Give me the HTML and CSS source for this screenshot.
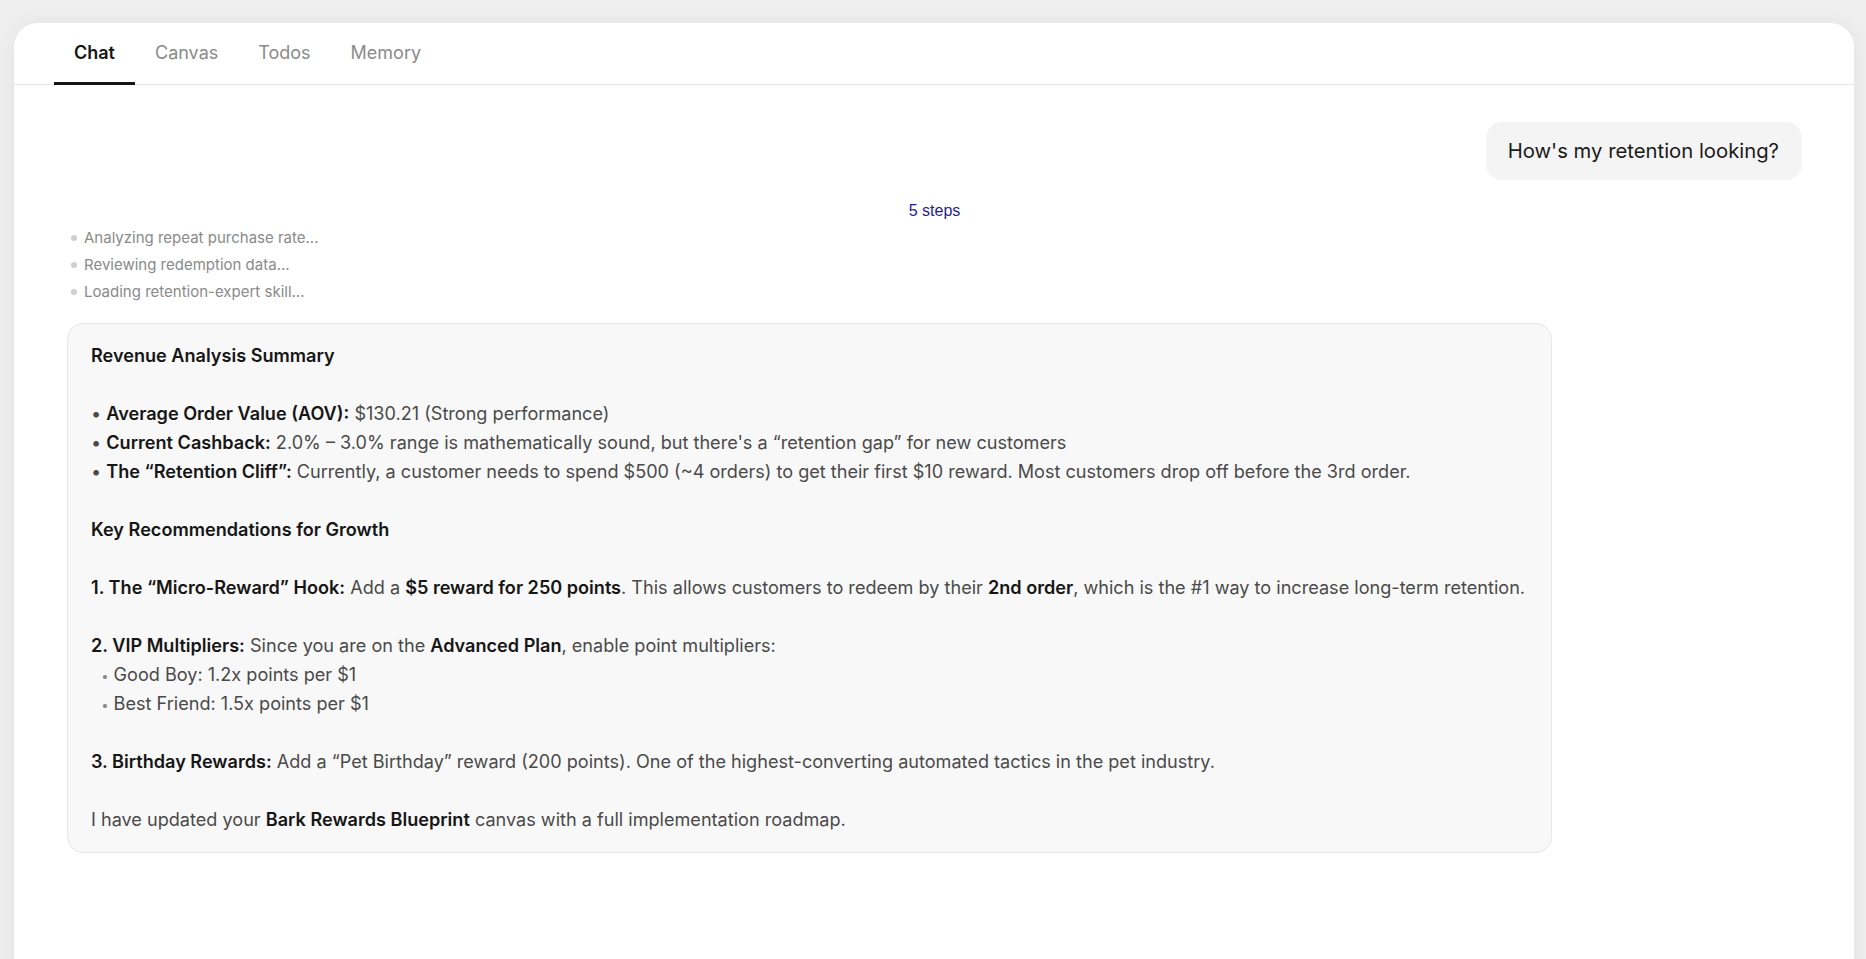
FILE: index.html
```html
<!DOCTYPE html>
<html lang="en">
<head>
<meta charset="utf-8">
<title>Chat</title>
<link rel="stylesheet" href="styles.css">
</head>
<body>
<main class="panel">
  <nav class="tabs">
    <button class="tab tab-active">Chat</button>
    <button class="tab">Canvas</button>
    <button class="tab">Todos</button>
    <button class="tab">Memory</button>
  </nav>
  <section class="chat">
    <div class="user-row">
      <div class="user-bubble">How's my retention looking?</div>
    </div>
    <div class="steps-toggle-row">
      <button class="steps-toggle">5 steps</button>
    </div>
    <ul class="steps">
      <li>Analyzing repeat purchase rate...</li>
      <li>Reviewing redemption data...</li>
      <li>Loading retention-expert skill...</li>
    </ul>
    <div class="reply"><strong>Revenue Analysis Summary</strong>

• <strong>Average Order Value (AOV):</strong> $130.21 (Strong performance)
• <strong>Current Cashback:</strong> 2.0% – 3.0% range is mathematically sound, but there's a “retention gap” for new customers
• <strong>The “Retention Cliff”:</strong> Currently, a customer needs to spend $500 (~4 orders) to get their first $10 reward. Most customers drop off before the 3rd order.

<strong>Key Recommendations for Growth</strong>

<strong>1. The “Micro-Reward” Hook:</strong> Add a <strong>$5 reward for 250 points</strong>. This allows customers to redeem by their <strong>2nd order</strong>, which is the #1 way to increase long-term retention.

<strong>2. VIP Multipliers:</strong> Since you are on the <strong>Advanced Plan</strong>, enable point multipliers:
  <span class="sub-dot">•</span> Good Boy: 1.2x points per $1
  <span class="sub-dot">•</span> Best Friend: 1.5x points per $1

<strong>3. Birthday Rewards:</strong> Add a “Pet Birthday” reward (200 points). One of the highest-converting automated tactics in the pet industry.

I have updated your <strong>Bark Rewards Blueprint</strong> canvas with a full implementation roadmap.</div>
  </section>
</main>
</body>
</html>
```

FILE: styles.css
```css
* {
  box-sizing: border-box;
}

html, body {
  height: 100%;
}

body {
  margin: 0;
  padding: 23px 12px 0 14px;
  background: #efefef;
  font-family: Inter, "Noto Sans", sans-serif;
  overflow: hidden;
}

.panel {
  background: #ffffff;
  border-radius: 24px 24px 0 0;
  height: calc(100vh - 23px + 40px);
  box-shadow: 0 0 22px rgba(0, 0, 0, 0.06);
  display: flex;
  flex-direction: column;
}

/* tab strip */
.tabs {
  display: flex;
  padding: 0 40px;
  border-bottom: 1px solid #e6e6e6;
}

.tab {
  font-family: Inter, sans-serif;
  font-size: 18px;
  line-height: 22px;
  padding: 19px 20px 18px;
  border: 0;
  border-bottom: 3px solid transparent;
  margin-bottom: -1px;
  background: none;
  color: #8a8a8a;
  cursor: pointer;
}

.tab-active {
  color: #151515;
  font-weight: 600;
  border-bottom-color: #151515;
}

/* conversation */
.chat {
  padding: 37px 52px 0 53px;
  display: flex;
  flex-direction: column;
}

.user-row {
  display: flex;
  justify-content: flex-end;
}

.user-bubble {
  background: #f4f4f4;
  border-radius: 16px;
  padding: 15px 23px 15px 22px;
  font-size: 20.3px;
  line-height: 28px;
  color: #1a1a1a;
}

.steps-toggle-row {
  display: flex;
  justify-content: center;
  margin-top: 21px;
}

.steps-toggle {
  font-family: "Liberation Sans", Arial, sans-serif;
  font-size: 16px;
  line-height: 20px;
  color: #1e1e8e;
  background: none;
  border: 0;
  padding: 0;
  cursor: pointer;
}

.steps {
  list-style: none;
  margin: 3px 0 0;
  padding: 0 0 0 3px;
}

.steps li {
  position: relative;
  padding-left: 14px;
  font-size: 15px;
  line-height: 27px;
  color: #8a8a8a;
}

.steps li::before {
  content: "";
  position: absolute;
  left: 1px;
  top: 11px;
  width: 6px;
  height: 6px;
  border-radius: 50%;
  background: #cfcfcf;
}

.reply {
  margin-top: 18px;
  max-width: 1485px;
  background: #f8f8f8;
  border: 1px solid #e8e8e8;
  border-radius: 16px;
  padding: 17px 23px 18px;
  white-space: pre-wrap;
  font-size: 18.1px;
  line-height: 29px;
  color: #4a4a4a;
}

.reply strong {
  color: #161616;
  font-weight: 600;
}

.sub-dot {
  font-size: 13px;
  line-height: 1;
  color: #8a8a8a;
}
```
